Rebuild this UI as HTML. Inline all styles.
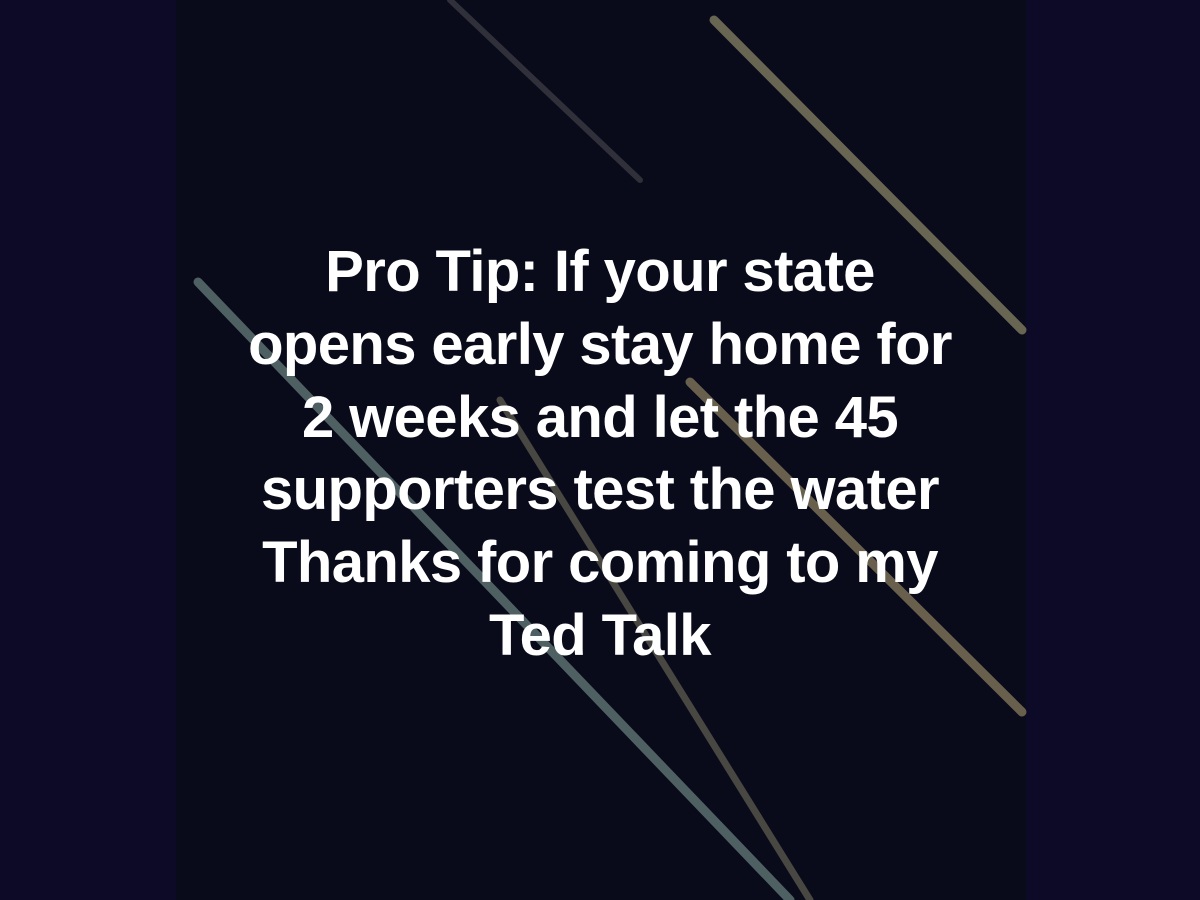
<!DOCTYPE html>
<html><head><style>
html,body{margin:0;padding:0;width:1200px;height:900px;overflow:hidden;background:#0c0a26}
#p{position:absolute;left:176px;top:0;width:850px;height:900px;background:#090b1b}
svg{position:absolute;left:0;top:0}
#t{position:absolute;left:0;top:236px;width:1200px;text-align:center;color:#fff;font:bold 58px/72.8px "Liberation Sans",sans-serif;letter-spacing:-0.6px;white-space:nowrap}
</style></head><body>
<div id="p"></div>
<svg width="1200" height="900">
<g stroke-linecap="round" fill="none">
<line x1="198" y1="282" x2="790" y2="900" stroke="#7d9a92" stroke-width="9" opacity="0.6"/>
<line x1="714" y1="20" x2="1022" y2="330" stroke="#a8a47a" stroke-width="9" opacity="0.6"/>
<line x1="450" y1="0" x2="640" y2="180" stroke="#6a6a6a" stroke-width="6" opacity="0.4"/>
<line x1="690" y1="382" x2="1022" y2="712" stroke="#a89a70" stroke-width="9" opacity="0.6"/>
<line x1="500" y1="400" x2="810" y2="900" stroke="#8a8468" stroke-width="7" opacity="0.5"/>
</g>
</svg>
<div id="t">Pro Tip: If your state<br>opens early stay home for<br>2 weeks and let the 45<br>supporters test the water<br>Thanks for coming to my<br>Ted Talk</div>
</body></html>
